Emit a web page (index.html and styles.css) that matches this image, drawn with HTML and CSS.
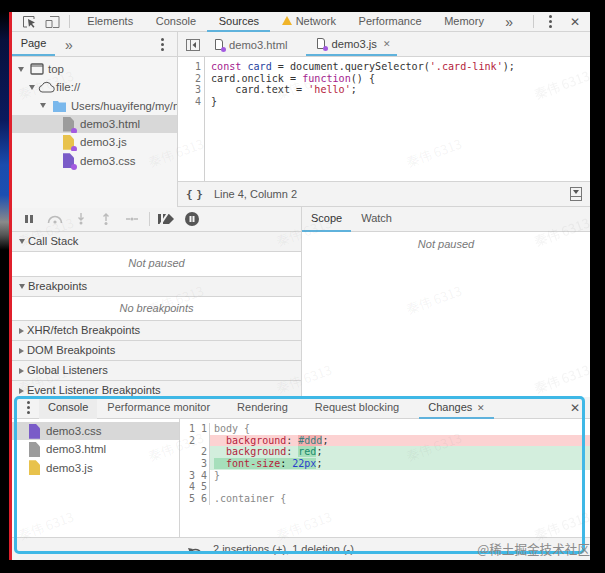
FILE: index.html
```html
<!DOCTYPE html>
<html>
<head>
    <title>DevTools Changes</title>
    <link rel="stylesheet" href="styles.css">
</head>
<body>
    <div class="devtools">
        <div class="main-tabs">
            <svg class="tool-icon" width="15" height="15" viewBox="0 0 15 15"><path d="M5 13H1.500V2.500H12V5" fill="none" stroke="#666"/><path d="M6 5l7 3.500-3 1.200 2.500 3-1.200 1-2.400-3-2 2z" fill="#555"/></svg>
            <svg class="tool-icon" width="16" height="15" viewBox="0 0 16 15"><path d="M5 2.500h9v11H8M1 6.500h6v7H1z" fill="none" stroke="#777"/></svg>
            <span class="tool-sep"></span>
            <span class="main-tab">Elements</span>
            <span class="main-tab">Console</span>
            <span class="main-tab active">Sources</span>
            <span class="main-tab"><svg class="warn" width="10" height="9" viewBox="0 0 10 9"><path d="M5 0l5 9H0z" fill="#f0b429"/></svg>Network</span>
            <span class="main-tab">Performance</span>
            <span class="main-tab">Memory</span>
            <span class="chevrons">»</span>
            <span class="tool-sep right"></span>
            <span class="dots"><i></i><i></i><i></i></span>
            <span class="close-x">✕</span>
        </div>

        <div class="sources">
            <div class="navigator">
                <div class="sub-tabs">
                    <span class="page-tab">Page</span>
                    <span class="chevrons small">»</span>
                    <span class="dots"><i></i><i></i><i></i></span>
                </div>
                <div class="tree">
                    <div class="tree-row lvl0"><span class="arrow down"></span><svg width="14" height="12" viewBox="0 0 14 12"><rect x="1" y="1" width="12" height="10" rx="1" fill="none" stroke="#555" stroke-width="1.300"/><path d="M1 3h12" stroke="#555"/></svg><span>top</span></div>
                    <div class="tree-row lvl1"><span class="arrow down"></span><svg width="17" height="12" viewBox="0 0 17 12"><path d="M4 11h9a3 3 0 0 0 .5-6A5 5 0 0 0 4 4.500 3.300 3.300 0 0 0 4 11z" fill="none" stroke="#555"/></svg><span>file://</span></div>
                    <div class="tree-row lvl2"><span class="arrow down"></span><svg width="13" height="12" viewBox="0 0 13 12"><path d="M0 1h5l1 1.500h7V12H0z" fill="#7ab8ec"/></svg><span>Users/huayifeng/my/n</span></div>
                    <div class="tree-row lvl3 selected"><span class="file grey"><b></b></span><span>demo3.html</span></div>
                    <div class="tree-row lvl3"><span class="file yellow"><b></b></span><span>demo3.js</span></div>
                    <div class="tree-row lvl3"><span class="file purple"><b></b></span><span>demo3.css</span></div>
                </div>
            </div>
            <div class="editor">
                <div class="sub-tabs editor-tabs">
                    <svg class="toggle" width="14" height="12" viewBox="0 0 14 12"><rect x=".5" y=".5" width="13" height="11" fill="none" stroke="#777"/><path d="M4.500 0v12" stroke="#777"/><path d="M10 3v6L6.500 6z" fill="#555"/></svg>
                    <span class="file-tab"><span class="doc"><b></b></span>demo3.html</span>
                    <span class="file-tab active"><span class="doc"><b></b></span>demo3.js<em>✕</em></span>
                </div>
                <div class="code">
                    <div class="gutter">1<br>2<br>3<br>4</div>
                    <pre class="source"><span class="kw">const</span> <span class="def">card</span> = document.querySelector(<span class="str">'.card-link'</span>);
card.onclick = <span class="kw">function</span>() {
    card.text = <span class="str">'hello'</span>;
}</pre>
                </div>
                <div class="status">
                    <span class="braces">{ }</span>
                    <span>Line 4, Column 2</span>
                    <svg class="coverage" width="12" height="14" viewBox="0 0 12 14"><rect x=".5" y=".5" width="11" height="13" fill="none" stroke="#777"/><path d="M0 9.500h12" stroke="#777"/><path d="M3 3h6L6 7z" fill="#555"/></svg>
                </div>
            </div>
        </div>

        <div class="debugger">
            <div class="debug-left">
                <div class="debug-bar">
                    <svg width="10" height="10" viewBox="0 0 10 10"><path d="M1 1h3v8H1zM6 1h3v8H6z" fill="#666"/></svg>
                    <svg width="16" height="10" viewBox="0 0 16 10"><path d="M1.500 9a6.500 6.500 0 0 1 13 0" fill="none" stroke="#bbb" stroke-width="1.600"/><circle cx="8" cy="8" r="1.600" fill="#bbb"/></svg>
                    <svg width="10" height="12" viewBox="0 0 10 12"><path d="M5 0v7M2.500 4.500L5 7l2.500-2.500" fill="none" stroke="#bbb" stroke-width="1.400"/><circle cx="5" cy="10" r="1.500" fill="#bbb"/></svg>
                    <svg class="wide" width="10" height="12" viewBox="0 0 10 12"><path d="M5 8V1M2.500 3.500L5 1l2.500 2.500" fill="none" stroke="#bbb" stroke-width="1.400"/><circle cx="5" cy="10.500" r="1.500" fill="#bbb"/></svg>
                    <svg class="wide" width="12" height="8" viewBox="0 0 12 8"><path d="M0 4h4M8 4h4" stroke="#bbb" stroke-width="1.400"/><circle cx="6" cy="4" r="1.600" fill="#bbb"/></svg>
                    <span class="debug-sep"></span>
                    <svg width="17" height="12" viewBox="0 0 17 12"><path d="M6 1h6l5 5-5 5H6z" fill="#555"/><path d="M1 1h3v10H1z" fill="#555"/><path d="M3 12L11 0" stroke="#f3f3f3" stroke-width="2"/></svg>
                    <svg class="narrow" width="14" height="14" viewBox="0 0 14 14"><circle cx="7" cy="7" r="7" fill="#555"/><path d="M4.500 4h2v6h-2zM7.500 4h2v6h-2z" fill="#f3f3f3"/></svg>
                </div>
                <div class="pane-head"><span class="arrow down"></span>Call Stack</div>
                <div class="pane-body">Not paused</div>
                <div class="pane-head"><span class="arrow down"></span>Breakpoints</div>
                <div class="pane-body">No breakpoints</div>
                <div class="pane-head"><span class="arrow right"></span>XHR/fetch Breakpoints</div>
                <div class="pane-head"><span class="arrow right"></span>DOM Breakpoints</div>
                <div class="pane-head"><span class="arrow right"></span>Global Listeners</div>
                <div class="pane-head"><span class="arrow right"></span>Event Listener Breakpoints</div>
            </div>
            <div class="debug-right">
                <div class="scope-tabs">
                    <span class="scope-tab active">Scope</span>
                    <span class="scope-tab">Watch</span>
                </div>
                <div class="scope-body">Not paused</div>
            </div>
        </div>

        <div class="drawer">
            <div class="drawer-tabs">
                <span class="dots"><i></i><i></i><i></i></span>
                <span class="drawer-tab console">Console</span>
                <span class="drawer-tab">Performance monitor</span>
                <span class="drawer-tab">Rendering</span>
                <span class="drawer-tab">Request blocking</span>
                <span class="drawer-tab active">Changes<em>✕</em></span>
                <span class="close-x">✕</span>
            </div>
            <div class="changes">
                <div class="change-files">
                    <div class="change-file selected"><span class="file purple"></span>demo3.css</div>
                    <div class="change-file"><span class="file grey"></span>demo3.html</div>
                    <div class="change-file"><span class="file yellow"></span>demo3.js</div>
                </div>
                <div class="diff">
                    <div class="diff-row"><span class="nums">1 1</span><span class="dim">body {</span></div>
                    <div class="diff-row del"><span class="nums">2  </span><span>  <span class="prop">background</span>: <mark class="del-mark"><span class="val-del">#ddd</span></mark>;</span></div>
                    <div class="diff-row add"><span class="nums">  2</span><span>  <span class="prop">background</span>: <mark class="add-mark"><span class="val-add">red</span></mark>;</span></div>
                    <div class="diff-row add"><span class="nums">  3</span><span><mark class="add-mark">  <span class="prop">font-size</span>: <span class="val-num">22px</span></mark>;</span></div>
                    <div class="diff-row"><span class="nums">3 4</span><span class="dim">}</span></div>
                    <div class="diff-row"><span class="nums">4 5</span><span></span></div>
                    <div class="diff-row"><span class="nums">5 6</span><span class="dim">.container {</span></div>
                </div>
            </div>
            <div class="drawer-status">
                <svg width="15" height="9" viewBox="0 0 15 9"><path d="M2 8a6 6 0 0 1 11 0" fill="none" stroke="#555" stroke-width="1.500"/><path d="M0 3l5 1-3 4z" fill="#555"/></svg>
                <span>2 insertions (+), 1 deletion (-)</span>
            </div>
            <div class="highlight"></div>
            <div class="site-mark">@稀土掘金技术社区</div>
        </div>

        <div class="marks marks-a">
            <span>秦伟 6313</span><span>秦伟 6313</span>
            <span>秦伟 6313</span><span>秦伟 6313</span>
            <span>秦伟 6313</span><span>秦伟 6313</span>
        </div>
        <div class="marks marks-b">
            <span>秦伟 6313</span><span>秦伟 6313</span><span>秦伟 6313</span>
            <span>秦伟 6313</span><span>秦伟 6313</span><span>秦伟 6313</span>
            <span>秦伟 6313</span><span>秦伟 6313</span><span>秦伟 6313</span>
            <span>秦伟 6313</span><span>秦伟 6313</span><span>秦伟 6313</span>
        </div>
    </div>
</body>
</html>
```

FILE: styles.css
```css
html, body {
    margin: 0;
    height: 100%;
    overflow: hidden;
}
body {
    background: #000 linear-gradient(180deg, #000 12px, #07103c 40px, #0a1a5e 120px, #1a4cae 165px, #1c4fb2 195px, #8a8a8a 222px, #555 235px, #000 250px) no-repeat;
    background-size: 9px 100%;
    font-family: "Liberation Sans", Arial, sans-serif;
    font-size: 11px;
    color: #444;
}
.devtools {
    margin: 12px 15px 0 9px;
    height: 548px;
    width: 581px;
    box-sizing: border-box;
    border-left: 3px solid #e0202c;
    background: #f3f3f3;
    display: flex;
    flex-direction: column;
    position: relative;
    filter: blur(0.35px);
}
svg {
    flex: none;
}

/* main tab strip */
.main-tabs {
    height: 19px;
    display: flex;
    align-items: center;
    border-bottom: 1px solid #d4d4d4;
    flex: none;
    color: #5a5a5a;
}
.tool-icon {
    margin-left: 10px;
}
.tool-icon + .tool-icon {
    margin-left: 8px;
}
.tool-sep {
    width: 1px;
    height: 13px;
    background: #ccc;
    margin: 0 6px 0 8px;
}
.tool-sep.right {
    margin: 0 15px 0 20px;
}
.main-tab {
    padding: 0 11.300px;
    height: 20px;
    line-height: 18px;
    box-sizing: border-box;
    white-space: nowrap;
}
.main-tab.active {
    color: #333;
    border-bottom: 2px solid #5fb2dc;
}
.warn {
    margin-right: 4px;
}
.chevrons {
    font-size: 14px;
    margin-left: 10px;
    line-height: 16px;
}
.chevrons.small {
    margin-left: 10px;
    color: #666;
}
.dots {
    display: flex;
    flex-direction: column;
    gap: 2px;
}
.dots i {
    width: 3px;
    height: 3px;
    border-radius: 50%;
    background: #555;
}
.close-x {
    font-size: 12px;
    color: #555;
    margin-left: auto;
    margin-right: 10px;
}

/* sources panel */
.sources {
    display: flex;
    height: 174px;
    flex: none;
    border-bottom: 1px solid #d4d4d4;
}
.navigator {
    width: 165px;
    flex: none;
    border-right: 1px solid #d4d4d4;
}
.sub-tabs {
    height: 23px;
    padding-top: 1px;
    display: flex;
    align-items: center;
    border-bottom: 1px solid #d4d4d4;
}
.page-tab {
    width: 43px;
    height: 23px;
    line-height: 21px;
    text-align: center;
    box-sizing: border-box;
    border-bottom: 2px solid #5fb2dc;
    color: #333;
}
.sub-tabs .dots {
    margin-left: auto;
    margin-right: 13px;
}
.tree {
    height: 149px;
    padding-top: 2px;
    background: #f5f5f5;
}
.tree-row {
    height: 18.300px;
    display: flex;
    align-items: center;
    gap: 4px;
    white-space: nowrap;
    overflow: hidden;
    color: #555;
    font-size: 11.500px;
}
.lvl0 {
    padding-left: 6px;
    margin-top: 1px;
}
.lvl1 {
    padding-left: 17px;
    gap: 1px;
}
.lvl2 {
    padding-left: 28px;
    gap: 5px;
    font-size: 11.200px;
}
.lvl3 {
    padding-left: 51px;
    gap: 6px;
}
.selected {
    background: #d8d8d8;
}
.arrow {
    display: inline-block;
    flex: none;
    margin-right: 2px;
}
.arrow.down {
    border: 3.500px solid transparent;
    border-top: 5px solid #6e6e6e;
    border-bottom: 0;
}
.arrow.right {
    border: 3.500px solid transparent;
    border-left: 5px solid #777;
    border-right: 0;
}
.file {
    display: inline-block;
    width: 11px;
    height: 15px;
    flex: none;
    position: relative;
}
.file::before {
    content: '';
    position: absolute;
    inset: 0;
    clip-path: polygon(0 0, 62% 0, 100% 30%, 100% 100%, 0 100%);
    background: var(--file-color);
}
.file.grey { --file-color: #9c9c9c; }
.file.yellow { --file-color: #e8c24c; }
.file.purple { --file-color: #7a5cc8; }
.file b {
    position: absolute;
    right: -3px;
    bottom: -2px;
    width: 6px;
    height: 6px;
    border-radius: 50%;
    background: #a35ae0;
}

/* editor */
.editor {
    flex: 1;
    min-width: 0;
    display: flex;
    flex-direction: column;
}
.editor-tabs {
    padding-left: 8px;
}
.toggle {
    margin-right: 15px;
}
.file-tab {
    height: 23px;
    box-sizing: border-box;
    padding-right: 19px;
    display: flex;
    align-items: center;
    color: #666;
    font-size: 11.200px;
}
.file-tab.active {
    color: #444;
    border-bottom: 2px solid #5fb2dc;
    padding: 0 6px 0 11px;
}
.file-tab em {
    font-style: normal;
    font-size: 9px;
    margin-left: 6px;
    color: #777;
}
.doc {
    width: 8px;
    height: 11px;
    border: 1px solid #666;
    border-top-right-radius: 3px;
    position: relative;
    margin-right: 6px;
    box-sizing: border-box;
    background: #fff;
}
.doc b {
    position: absolute;
    right: -4px;
    bottom: -3px;
    width: 5px;
    height: 5px;
    border-radius: 50%;
    background: #a35ae0;
}
.code {
    flex: 1;
    display: flex;
    background: #fff;
}
.gutter {
    width: 27px;
    box-sizing: border-box;
    padding-right: 3px;
    padding-top: 4px;
    text-align: right;
    border-right: 1px solid #d0d0d0;
    font-family: "DejaVu Sans Mono", monospace;
    font-size: 10px;
    line-height: 11.700px;
    color: #777;
}
.source {
    margin: 0 0 0 6px;
    padding-top: 4px;
    font-family: "DejaVu Sans Mono", monospace;
    font-size: 10.100px;
    line-height: 11.700px;
    color: #333;
}
.kw { color: #a31a8e; }
.def { color: #1f3f9e; }
.str { color: #b4233c; }
.status {
    height: 25px;
    flex: none;
    box-sizing: border-box;
    display: flex;
    align-items: center;
    padding-left: 8px;
    border-top: 1px solid #d4d4d4;
    color: #555;
}
.braces {
    font-family: "DejaVu Sans Mono", monospace;
    font-size: 11px;
    font-weight: bold;
    margin-right: 11px;
    word-spacing: -3px;
}
.coverage {
    margin-left: auto;
    margin-right: 8px;
}

/* debugger panes */
.debugger {
    display: flex;
    height: 190px;
    flex: none;
    overflow: hidden;
}
.debug-left {
    width: 289px;
    flex: none;
    border-right: 1px solid #d4d4d4;
}
.debug-bar {
    height: 24px;
    display: flex;
    align-items: center;
    gap: 13px;
    padding-left: 12px;
    border-bottom: 1px solid #d4d4d4;
}
.debug-bar .wide {
    margin-left: 2px;
}
.debug-bar .narrow {
    margin-left: -2px;
}
.debug-sep {
    width: 1px;
    height: 14px;
    background: #d0d0d0;
    margin: 0 -6px 0 -2px;
}
.pane-head {
    height: 19px;
    line-height: 19px;
    padding-left: 7px;
    border-bottom: 1px solid #d4d4d4;
    color: #444;
    display: flex;
    align-items: center;
    font-size: 11.200px;
}
.pane-head .arrow {
    margin-right: 3px;
}
.pane-body {
    height: 23.500px;
    line-height: 23px;
    background: #fff;
    border-bottom: 1px solid #d4d4d4;
    text-align: center;
    font-style: italic;
    color: #777;
}
.debug-right {
    flex: 1;
    background: #fff;
}
.scope-tabs {
    height: 25px;
    display: flex;
    box-sizing: border-box;
    background: #f3f3f3;
    border-bottom: 1px solid #d4d4d4;
}
.scope-tab {
    padding: 0 12px 0 9px;
    line-height: 23px;
    height: 25px;
    box-sizing: border-box;
    color: #555;
}
.scope-tab.active {
    color: #333;
    border-bottom: 2px solid #5fb2dc;
    padding: 0 9px;
}
.scope-tab + .scope-tab {
    margin-left: 1px;
}
.scope-body {
    text-align: center;
    font-style: italic;
    color: #777;
    padding-top: 6px;
}

/* drawer */
.drawer {
    flex: 1;
    display: flex;
    flex-direction: column;
    background: #fff;
    min-height: 0;
    position: relative;
}
.drawer-tabs {
    height: 22px;
    flex: none;
    display: flex;
    align-items: center;
    background: #f3f3f3;
    border-bottom: 1px solid #d4d4d4;
    box-sizing: border-box;
    color: #555;
}
.drawer-tabs .dots {
    margin-left: 15px;
    margin-right: 9px;
}
.drawer-tab {
    padding: 0 13.500px;
    height: 22px;
    line-height: 20px;
    box-sizing: border-box;
    white-space: nowrap;
}
.drawer-tab.console {
    background: #ececec;
    color: #444;
    padding: 0 9px;
    margin-right: -3.500px;
}
.drawer-tab.active {
    color: #444;
    border-bottom: 2px solid #5fb2dc;
    padding: 0 9px;
    margin-left: 6.500px;
}
.drawer-tab em {
    font-style: normal;
    font-size: 9px;
    margin-left: 5px;
    color: #666;
}
.changes {
    flex: 1;
    display: flex;
    min-height: 0;
}
.change-files {
    width: 167px;
    flex: none;
    border-right: 1px solid #d4d4d4;
    padding-top: 3px;
}
.change-file {
    height: 18.300px;
    display: flex;
    align-items: center;
    gap: 6px;
    padding-left: 17px;
    font-size: 11.500px;
    color: #555;
}
.diff {
    flex: 1;
    min-width: 0;
    padding-top: 4px;
    font-family: "DejaVu Sans Mono", monospace;
    font-size: 10px;
    line-height: 11.700px;
}
.diff-row {
    display: flex;
    color: #333;
    height: 11.700px;
    white-space: pre;
}
.nums {
    width: 30px;
    flex: none;
    box-sizing: border-box;
    padding-left: 9px;
    margin-right: 4px;
    background: #fff;
    border-right: 1px solid #d4d4d4;
    color: #777;
}
.dim { color: #888; }
.del { background: #fcd2d2; }
.add { background: #d3eedd; }
.prop { color: #b4233c; }
.val-del { color: #3a7d7d; }
.val-add { color: #1c8c6c; }
.val-num { color: #2a3ecc; }
.del-mark {
    background: #f5b0b0;
}
.add-mark {
    background: #a6dfbb;
}
.drawer-status {
    height: 23px;
    flex: none;
    box-sizing: border-box;
    border-top: 1px solid #d4d4d4;
    background: #f3f3f3;
    display: flex;
    align-items: center;
    gap: 10px;
    padding-left: 176px;
    color: #555;
}

/* blue annotation drawn over the screenshot */
.highlight {
    position: absolute;
    left: 2px;
    top: -1px;
    width: 571px;
    height: 158px;
    box-sizing: border-box;
    border: 3px solid #3fb8e6;
    border-radius: 5px;
}
.site-mark {
    position: absolute;
    right: 0;
    bottom: 2px;
    font-family: "Noto Sans CJK SC", sans-serif;
    font-size: 12.600px;
    color: #8a8a8a;
}

/* faint watermark lattice */
.marks {
    position: absolute;
    display: grid;
    pointer-events: none;
}
.marks span {
    align-self: start;
    justify-self: start;
    font-family: "Noto Sans CJK SC", sans-serif;
    font-size: 13px;
    line-height: 16px;
    color: rgba(120, 120, 120, 0.08);
    transform: rotate(-20deg);
    white-space: nowrap;
}
.marks-a {
    left: 135px;
    top: 133px;
    grid-template-columns: 258px 60px;
    grid-template-rows: 147px 147px 16px;
}
.marks-b {
    left: 5px;
    top: 65px;
    grid-template-columns: 258px 258px 55px;
    grid-template-rows: 147px 147px 147px 16px;
}
```
